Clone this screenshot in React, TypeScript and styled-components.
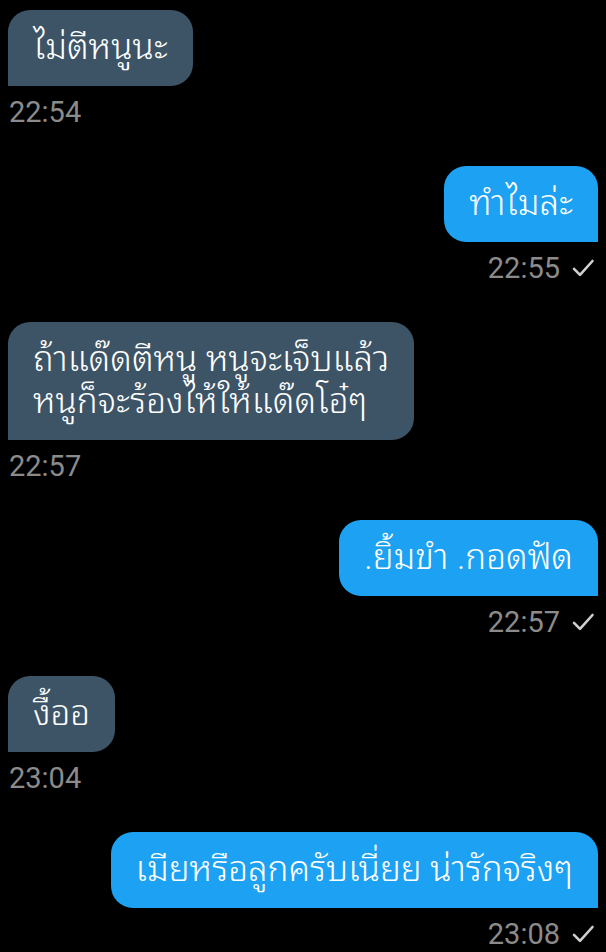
import React from "react";
import styled, { createGlobalStyle } from "styled-components";

const Global = createGlobalStyle`
  html, body { margin: 0; padding: 0; background: #000; }
  body { font-family: Roboto, "Noto Sans Thai Looped", "Noto Sans Thai", sans-serif; }
`;

const Page = styled.div`
  width: 606px;
  height: 952px;
  overflow: hidden;
  background: #000;
  box-sizing: border-box;
  padding: 10px 8px 0 8px;
  display: flex;
  flex-direction: column;
  gap: 36px;
`;

const Group = styled.div<{ $out?: boolean }>`
  display: flex;
  flex-direction: column;
  align-items: ${(p) => (p.$out ? "flex-end" : "flex-start")};
`;

const Bubble = styled.div<{ $out?: boolean }>`
  box-sizing: border-box;
  background: ${(p) => (p.$out ? "#1da1f2" : "#3d5466")};
  color: #fff;
  font-family: Roboto, "Noto Sans Thai Looped", sans-serif;
  font-size: 35px;
  font-weight: 300;
  line-height: 42px;
  padding: 17px 25px 17px 25px;
  border-radius: ${(p) => (p.$out ? "22px 22px 0 22px" : "22px 22px 22px 0")};
  white-space: pre;
`;

const Meta = styled.div<{ $out?: boolean }>`
  display: flex;
  align-items: center;
  gap: 11px;
  margin-top: 8px;
  padding: ${(p) => (p.$out ? "0 3px 0 0" : "0 0 0 1px")};
  color: #8b8b8b;
  font-family: Roboto, sans-serif;
  font-size: 29px;
  line-height: 36px;
`;

const Check = () => (
  <svg width="24" height="24" viewBox="0 0 24 24" fill="none">
    <path d="M3 12.8l6 6L21.5 5" stroke="#cfcfcf" strokeWidth="2.6" strokeLinecap="round" strokeLinejoin="round" />
  </svg>
);

const msgs: { out: boolean; text: string; time: string }[] = [
  { out: false, text: "ไม่ตีหนูนะ", time: "22:54" },
  { out: true, text: "ทำไมล่ะ", time: "22:55" },
  { out: false, text: "ถ้าแด๊ดตีหนู หนูจะเจ็บแล้ว\nหนูก็จะร้องไห้ให้แด๊ดโอ๋ๆ", time: "22:57" },
  { out: true, text: ".ยิ้มขำ .กอดฟัด", time: "22:57" },
  { out: false, text: "งื้ออ", time: "23:04" },
  { out: true, text: "เมียหรือลูกครับเนี่ยย น่ารักจริงๆ", time: "23:08" },
];

export default function App() {
  return (
    <>
      <Global />
      <Page>
        {msgs.map((m, i) => (
          <Group key={i} $out={m.out}>
            <Bubble $out={m.out}>{m.text}</Bubble>
            <Meta $out={m.out}>
              <span>{m.time}</span>
              {m.out && <Check />}
            </Meta>
          </Group>
        ))}
      </Page>
    </>
  );
}
